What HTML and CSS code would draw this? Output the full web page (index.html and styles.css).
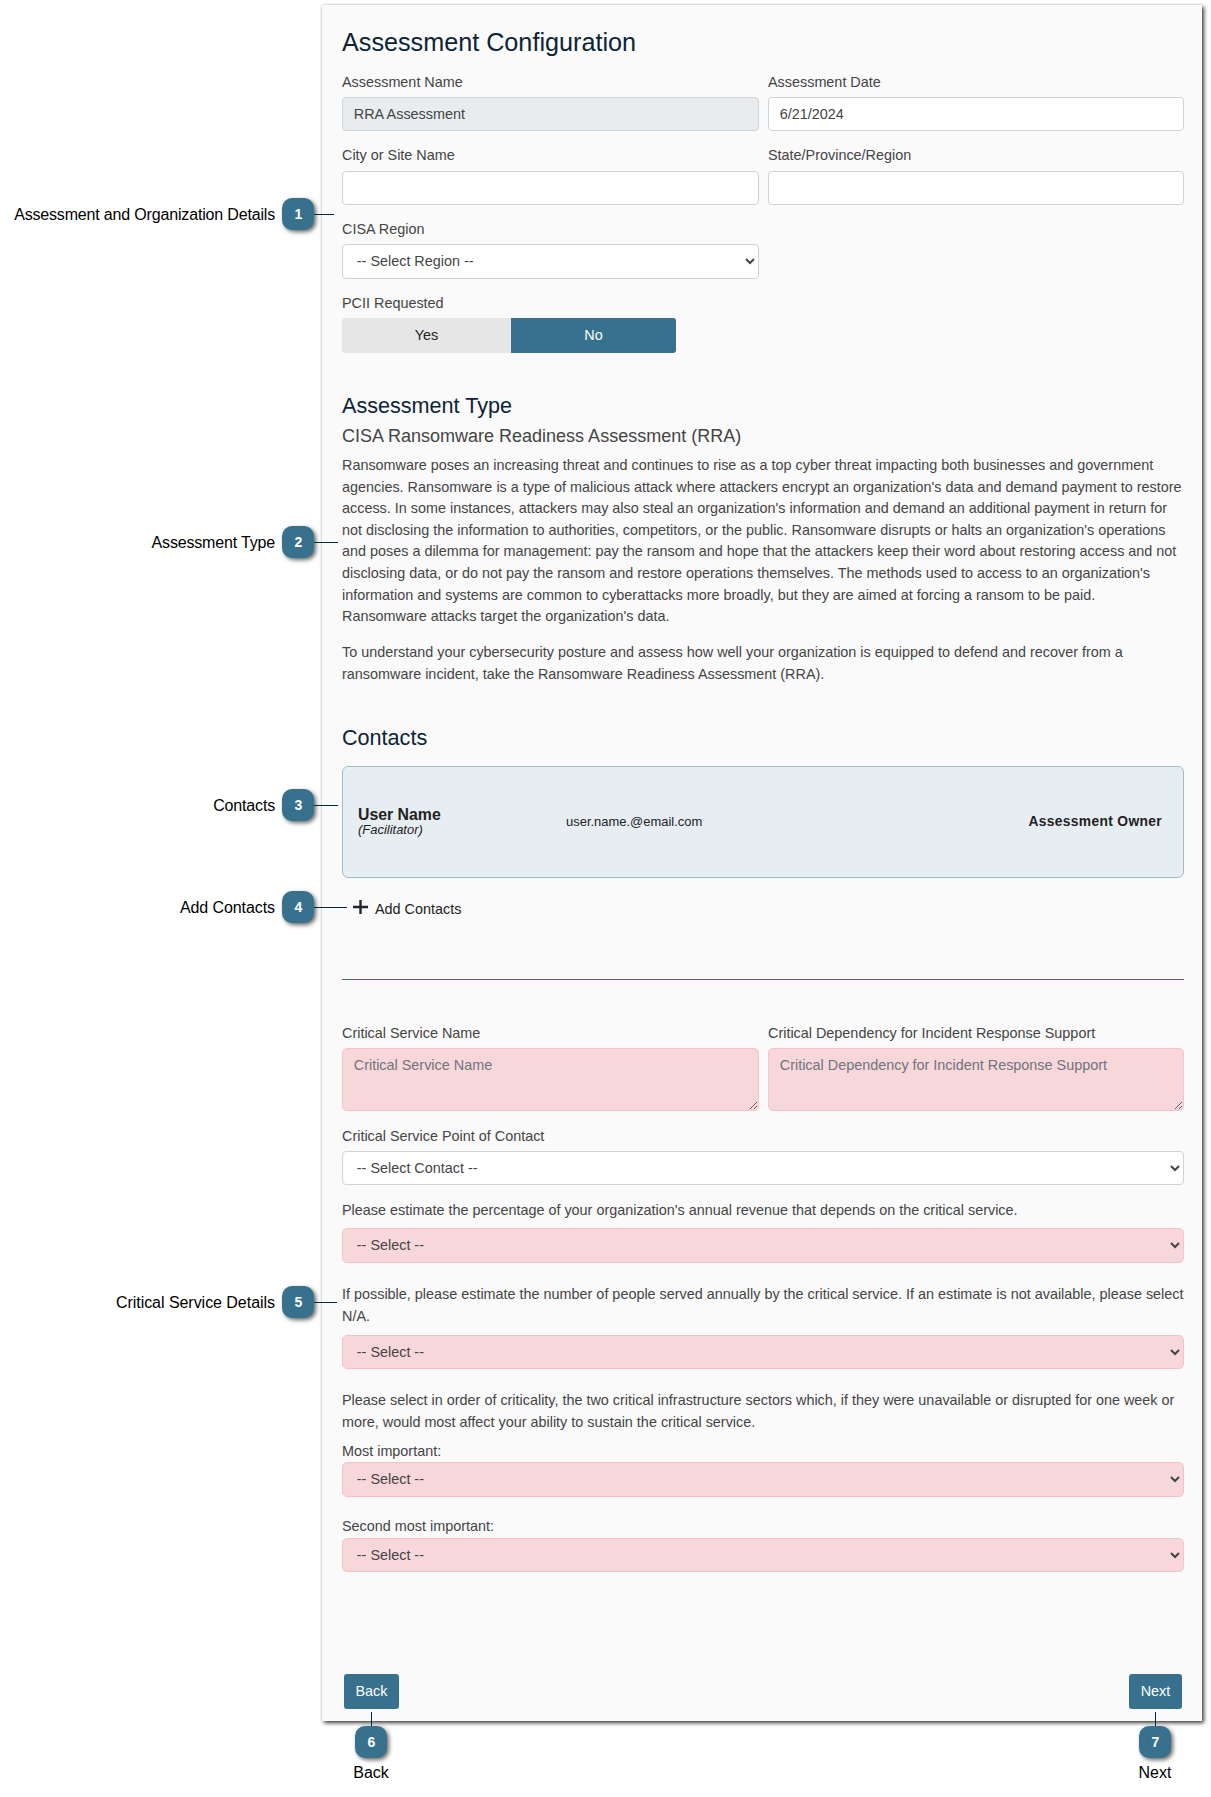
FILE: index.html
```html
<!DOCTYPE html>
<html lang="en">
<head>
<meta charset="utf-8">
<title>Assessment Configuration</title>
<link rel="stylesheet" href="styles.css">
</head>
<body>
<div class="page">
  <aside class="callouts">
    <div class="callout c1"><span class="callout-label">Assessment and Organization Details</span><span class="badge">1</span><span class="lead"></span></div>
    <div class="callout c2"><span class="callout-label">Assessment Type</span><span class="badge">2</span><span class="lead"></span></div>
    <div class="callout c3"><span class="callout-label">Contacts</span><span class="badge">3</span><span class="lead"></span></div>
    <div class="callout c4"><span class="callout-label">Add Contacts</span><span class="badge">4</span><span class="lead"></span></div>
    <div class="callout c5"><span class="callout-label">Critical Service Details</span><span class="badge">5</span><span class="lead"></span></div>
  </aside>
  <main class="panel">
    <section class="details">
      <h1>Assessment Configuration</h1>
      <div class="row">
        <div class="field"><label for="name">Assessment Name</label><input class="control readonly" id="name" value="RRA Assessment" readonly></div>
        <div class="field"><label for="date">Assessment Date</label><input class="control" id="date" value="6/21/2024"></div>
      </div>
      <div class="row row-site">
        <div class="field"><label for="city">City or Site Name</label><input class="control" id="city"></div>
        <div class="field"><label for="state">State/Province/Region</label><input class="control" id="state"></div>
      </div>
      <div class="row">
        <div class="field"><label for="region">CISA Region</label><select class="control tall" id="region"><option>-- Select Region --</option></select></div>
      </div>
      <div class="field">
        <label>PCII Requested</label>
        <div class="toggle"><button class="toggle-yes">Yes</button><button class="toggle-no">No</button></div>
      </div>
    </section>

    <section class="type">
      <h2>Assessment Type</h2>
      <h3>CISA Ransomware Readiness Assessment (RRA)</h3>
      <p>Ransomware poses an increasing threat and continues to rise as a top cyber threat impacting both businesses and government agencies. Ransomware is a type of malicious attack where attackers encrypt an organization's data and demand payment to restore access. In some instances, attackers may also steal an organization's information and demand an additional payment in return for not disclosing the information to authorities, competitors, or the public. Ransomware disrupts or halts an organization's operations and poses a dilemma for management: pay the ransom and hope that the attackers keep their word about restoring access and not disclosing data, or do not pay the ransom and restore operations themselves. The methods used to access to an organization's information and systems are common to cyberattacks more broadly, but they are aimed at forcing a ransom to be paid. Ransomware attacks target the organization's data.</p>
      <p>To understand your cybersecurity posture and assess how well your organization is equipped to defend and recover from a ransomware incident, take the Ransomware Readiness Assessment (RRA).</p>
    </section>

    <section class="contacts">
      <h2>Contacts</h2>
      <div class="card">
        <div class="person"><strong>User Name</strong><em>(Facilitator)</em></div>
        <span class="email">user.name.@email.com</span>
        <strong class="owner">Assessment Owner</strong>
      </div>
      <button class="add"><svg width="15" height="14" viewBox="0 0 15 14"><path d="M7.5 0v14M0 7h15" stroke="#1f2730" stroke-width="2.4" fill="none"/></svg><span>Add Contacts</span></button>
    </section>
    <hr>

    <section class="critical">
      <div class="row">
        <div class="field"><label for="svc">Critical Service Name</label><textarea class="control required" id="svc" placeholder="Critical Service Name"></textarea></div>
        <div class="field"><label for="dep">Critical Dependency for Incident Response Support</label><textarea class="control required" id="dep" placeholder="Critical Dependency for Incident Response Support"></textarea></div>
      </div>
      <div class="field poc"><label for="poc">Critical Service Point of Contact</label><select class="control" id="poc"><option>-- Select Contact --</option></select></div>
      <div class="field revenue"><label for="rev">Please estimate the percentage of your organization's annual revenue that depends on the critical service.</label><select class="control tall required" id="rev"><option>-- Select --</option></select></div>
      <div class="field people"><label for="ppl">If possible, please estimate the number of people served annually by the critical service. If an estimate is not available, please select N/A.</label><select class="control required" id="ppl"><option>-- Select --</option></select></div>
      <p class="sectors">Please select in order of criticality, the two critical infrastructure sectors which, if they were unavailable or disrupted for one week or more, would most affect your ability to sustain the critical service.</p>
      <div class="field most"><label for="s1">Most important:</label><select class="control tall required" id="s1"><option>-- Select --</option></select></div>
      <div class="field second"><label for="s2">Second most important:</label><select class="control required" id="s2"><option>-- Select --</option></select></div>
    </section>
    <nav class="pager"><button class="btn btn-back">Back</button><button class="btn btn-next">Next</button></nav>
  </main>
  <footer class="foot">
    <div class="foot-callout"><span class="drop"></span><span class="badge">6</span><span class="callout-label">Back</span></div>
    <div class="foot-callout"><span class="drop"></span><span class="badge">7</span><span class="callout-label">Next</span></div>
  </footer>
</div>
</body>
</html>
```
FILE: styles.css
```css
* { box-sizing: border-box; }
body {
  margin: 0;
  background: #fff;
  font: 14.4px/21.6px "Liberation Sans", Arial, sans-serif;
  color: #444;
}
h1, h2, h3, p { margin: 0; font-weight: 400; }
button, input, select, textarea { font: inherit; color: inherit; margin: 0; }
button { border: 0; padding: 0; background: none; }

.page {
  width: 1211px;
  height: 1797px;
  display: grid;
  grid-template-columns: 322px 880px;
  grid-template-rows: 1716px auto;
  padding-top: 5px;
  overflow: hidden;
}

/* Numbered annotations */
.callouts { z-index: 1; display: flex; flex-direction: column; }
.callout { display: flex; align-items: center; height: 32px; }
.callout-label {
  font-size: 16px;
  line-height: 20px;
  letter-spacing: -0.17px;
  color: #000;
  white-space: nowrap;
}
.callout .callout-label { width: 275px; flex: none; text-align: right; padding-top: 2px; }
.badge {
  flex: none;
  width: 32px;
  height: 32px;
  padding-left: 1px;
  border-radius: 10px;
  background: #37718e;
  box-shadow: 2px 2px 4px rgba(0, 0, 0, .6);
  color: #fff;
  font-size: 14px;
  font-weight: 700;
  line-height: 33px;
  text-align: center;
}
.callout .badge { margin-left: 7px; }
.lead { flex: none; height: 1px; margin-top: 1px; background: #002b3d; }
.c1 { margin-top: 193px; }
.c2 { margin-top: 296px; }
.c3 { margin-top: 231px; }
.c4 { margin-top: 70px; }
.c5 { margin-top: 363px; }
.c4 .callout-label { letter-spacing: -0.08px; }
.c5 .callout-label { letter-spacing: -0.04px; }
.c1 .lead { width: 20px; }
.c2 .lead { width: 24px; }
.c3 .lead { width: 24px; }
.c4 .lead { width: 33px; }
.c5 .lead { width: 23px; }

/* Form panel */
.panel {
  padding: 0 18px 12px 20px;
  background: #fafafa;
  box-shadow: 2px 2px 4px rgba(0, 0, 0, .75), 0 0 2px rgba(0, 0, 0, .18);
  display: flex;
  flex-direction: column;
}
h1, h2 { color: #0b2437; }
h1 { font-size: 25.2px; line-height: 30px; margin: 22px 0 1px; }
h2 { font-size: 21.6px; line-height: 26px; }
h3 { font-size: 18px; line-height: 22px; }

.row { display: grid; grid-template-columns: 417px 416px; column-gap: 9px; }
.details { display: flex; flex-direction: column; gap: 13px; }
.field { display: flex; flex-direction: column; gap: 4px; }
.field label { line-height: 22px; }
.row-site .field { gap: 5px; }
.control {
  width: 100%;
  height: 34px;
  padding: 0 10.8px;
  border: 1px solid #ced4da;
  border-radius: 4px;
  background-color: #fff;
  color: #444;
}
select.control { padding: 0 9.8px; }
.details select.control { padding-bottom: 1px; }
.tall { height: 35px; }
.readonly { background-color: #e9ecef; }
.required { background-color: #f8d7da; border-color: #f5c2c7; border-radius: 5px; }
textarea.control { display: block; height: 63px; padding-top: 6px; }
textarea::placeholder { color: #6c757d; opacity: 1; }

.toggle { display: flex; height: 35px; width: 334px; border-radius: 3px; overflow: hidden; }
.toggle-yes { width: 169px; background: #e6e6e6; color: #222; }
.toggle-no { width: 165px; background: #37718e; color: #fff; }

.type { margin-top: 40px; }
.type h3 { margin: 6px 0 8px; }
.type p { padding-right: 1.4px; }
.type p + p { margin-top: 14.4px; }

.contacts { margin-top: 39.6px; }
.card {
  display: flex;
  align-items: center;
  height: 112px;
  margin-top: 15px;
  padding: 0 21px 0 15px;
  border: 1px solid #a0bccb;
  border-radius: 6px;
  background: #e7eef2;
  color: #222;
}
.person { width: 208px; display: flex; flex-direction: column; }
.person strong { font-size: 15.84px; line-height: 16px; }
.person em { font-size: 12.96px; line-height: 14px; }
.email { font-size: 12.96px; padding-bottom: 1px; }
.owner { margin-left: auto; padding-bottom: 1px; font-size: 13.8px; letter-spacing: .34px; }
.add { display: flex; align-items: center; height: 22px; margin: 20px 0 0 11px; gap: 7px; color: #222; }
.add svg { margin-top: -4px; }
.add span { padding-top: 2px; }

hr { width: 100%; height: 1px; margin: 59px 0 42px; border: 0; background: #37718e; }

.poc { margin-top: 14px; }
.revenue { margin-top: 14px; gap: 7px; }
.people { margin-top: 20px; gap: 8px; }
.sectors { margin-top: 20px; line-height: 22px; }
.most { margin-top: 7px; gap: 0; }
.second { margin-top: 18px; gap: 1px; }

.pager { display: flex; justify-content: space-between; margin-top: auto; padding: 0 2px; }
.btn { height: 35px; border-radius: 3px; background: #37718e; color: #fff; }
.btn-back { width: 55px; }
.btn-next { width: 53px; }

/* Annotations under the panel */
.foot { grid-column: 2; display: flex; justify-content: space-between; margin-top: -9px; padding: 0 18px 0 20px; z-index: 1; }
.foot-callout { width: 58px; display: flex; flex-direction: column; align-items: center; }
.drop { width: 1px; height: 14px; background: #002b3d; }
.foot-callout .callout-label { margin-top: 5px; letter-spacing: 0; }
```
